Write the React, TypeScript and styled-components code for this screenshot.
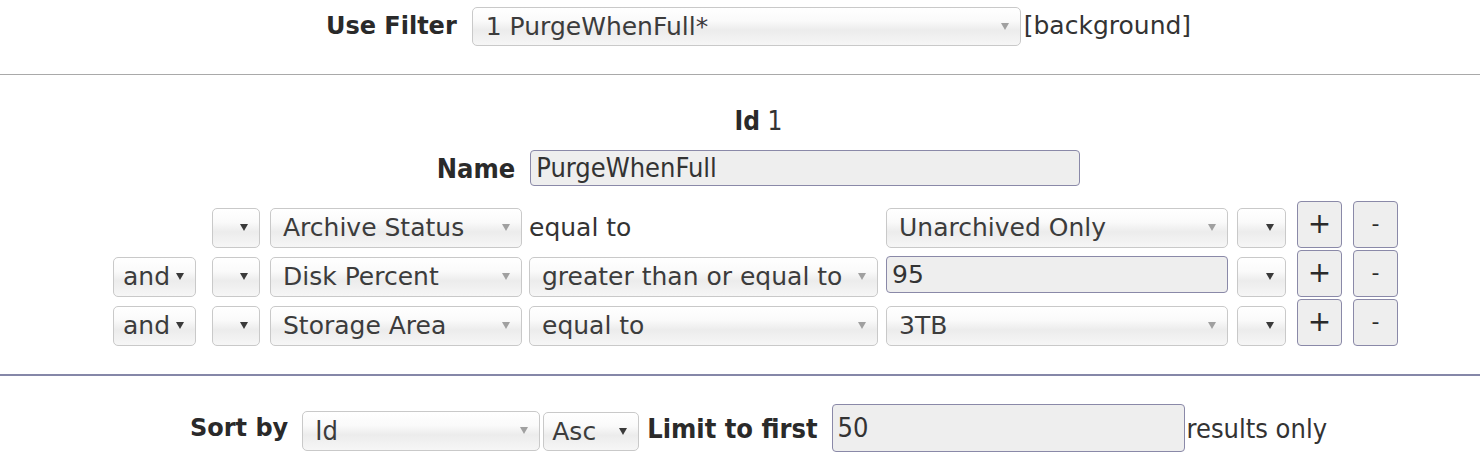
import React from "react";
import styled, { createGlobalStyle } from "styled-components";

const GlobalStyle = createGlobalStyle`
  html, body { margin: 0; padding: 0; background: #ffffff; }
  body { font-family: "DejaVu Sans", Verdana, sans-serif; color: #222; }
`;

const VERDANA = `"DejaVu Sans", Verdana, sans-serif`;
const TAHOMA = `"DejaVu Sans Condensed", "Liberation Sans Narrow", "Liberation Sans", sans-serif`;
const V_SIZE = 25;
const T_SIZE = 27;

const Page = styled.div`
  width: 1480px;
  display: flex;
  flex-direction: column;
`;

const TopBar = styled.div`
  height: 75px;
  border-bottom: 1px solid #a9a9a9;
  display: flex;
  align-items: flex-start;
  justify-content: center;
  padding: 7px 0 0 37px;
  box-sizing: border-box;
`;

const FilterSection = styled.div`
  border-bottom: 2px solid #8587a8;
  padding: 31px 0 28px 0;
  display: flex;
  flex-direction: column;
`;

const SortSection = styled.div`
  padding: 28px 0 0 37px;
  display: flex;
  justify-content: center;
  align-items: center;
`;

const CenterLine = styled.div<{ $mt?: number }>`
  display: flex;
  justify-content: center;
  align-items: center;
  padding-left: 37px;
  margin-top: ${(p) => p.$mt ?? 0}px;
`;

const BoldLabel = styled.span<{ $font?: "v" | "t"; $mr?: number; $ml?: number; $mt?: number }>`
  font-family: ${(p) => (p.$font === "t" ? TAHOMA : VERDANA)};
  font-weight: bold;
  font-size: ${(p) => (p.$font === "t" ? T_SIZE : V_SIZE - 1)}px;
  color: #2a2a2a;
  margin-right: ${(p) => p.$mr ?? 0}px;
  margin-left: ${(p) => p.$ml ?? 0}px;
  margin-top: ${(p) => p.$mt ?? 0}px;
  white-space: nowrap;
`;

const PlainText = styled.span<{ $font?: "v" | "t"; $mr?: number; $ml?: number; $mt?: number }>`
  font-family: ${(p) => (p.$font === "t" ? TAHOMA : VERDANA)};
  font-size: ${(p) => (p.$font === "t" ? T_SIZE : V_SIZE)}px;
  color: #333;
  margin-right: ${(p) => p.$mr ?? 0}px;
  margin-left: ${(p) => p.$ml ?? 0}px;
  margin-top: ${(p) => p.$mt ?? 0}px;
  white-space: nowrap;
`;

const IdText = styled.div`
  font-family: ${TAHOMA};
  font-size: ${T_SIZE - 1}px;
  color: #333;
  line-height: 30px;
  padding-left: 37px;
  text-align: center;
  & b { color: #2a2a2a; }
`;

const SelectBox = styled.div<{
  $w: number;
  $h?: number;
  $pl?: number;
  $mr?: number;
  $ml?: number;
  $mt?: number;
  $font?: "v" | "t";
}>`
  width: ${(p) => p.$w}px;
  height: ${(p) => p.$h ?? 40}px;
  margin-right: ${(p) => p.$mr ?? 0}px;
  margin-left: ${(p) => p.$ml ?? 0}px;
  margin-top: ${(p) => p.$mt ?? 0}px;
  box-sizing: border-box;
  flex: none;
  display: flex;
  align-items: center;
  justify-content: space-between;
  padding: 0 11px 1px ${(p) => p.$pl ?? 12}px;
  border: 1px solid #c9c9c9;
  border-radius: 5px;
  background: linear-gradient(to bottom, #ffffff 0%, #fafafa 35%, #ececec 60%, #f6f6f6 100%);
  font-family: ${(p) => (p.$font === "t" ? TAHOMA : VERDANA)};
  font-size: ${(p) => (p.$font === "t" ? T_SIZE : V_SIZE)}px;
  color: #3c3c3c;
  white-space: nowrap;
  overflow: hidden;
`;

const Arrow = styled.span<{ $dark?: boolean }>`
  flex: none;
  width: 0;
  height: 0;
  border-left: 4px solid transparent;
  border-right: 4px solid transparent;
  border-top: 7px solid ${(p) => (p.$dark ? "#3a3a3a" : "#a0a0a0")};
  margin-left: 6px;
`;

const TextInput = styled.div<{ $w: number; $h: number; $mr?: number; $mb?: number; $font?: "v" | "t" }>`
  width: ${(p) => p.$w}px;
  height: ${(p) => p.$h}px;
  margin-right: ${(p) => p.$mr ?? 0}px;
  margin-bottom: ${(p) => p.$mb ?? 0}px;
  box-sizing: border-box;
  flex: none;
  display: flex;
  align-items: center;
  padding: 0 0 1px 5px;
  border: 1px solid #8a89a8;
  border-radius: 4px;
  background: #eeeeee;
  font-family: ${(p) => (p.$font === "t" ? TAHOMA : VERDANA)};
  font-size: ${(p) => (p.$font === "t" ? T_SIZE : V_SIZE)}px;
  color: #333;
  white-space: nowrap;
`;

const Rules = styled.div`
  margin-top: 15px;
  padding-left: 113px;
  display: flex;
  flex-direction: column;
  gap: 2px;
`;

const RuleRow = styled.div`
  display: flex;
  align-items: flex-end;
  height: 47px;
`;

const Spacer = styled.div<{ $w: number }>`
  width: ${(p) => p.$w}px;
  flex: none;
`;

const OpText = styled.div<{ $w: number; $mr: number }>`
  width: ${(p) => p.$w}px;
  margin-right: ${(p) => p.$mr}px;
  flex: none;
  height: 40px;
  display: flex;
  align-items: center;
  font-family: ${VERDANA};
  font-size: ${V_SIZE}px;
  color: #333;
  padding-bottom: 1px;
  box-sizing: border-box;
`;

const RowButton = styled.button<{ $mr?: number }>`
  width: 45px;
  height: 47px;
  margin-right: ${(p) => p.$mr ?? 0}px;
  flex: none;
  box-sizing: border-box;
  border: 1px solid #8a89a8;
  border-radius: 4px;
  background: #eeeeee;
  font-family: ${VERDANA};
  font-size: 28px;
  color: #2a2a2a;
  padding: 0 0 2px 0;
  display: flex;
  align-items: center;
  justify-content: center;
  cursor: pointer;
`;

const MinusGlyph = styled.span`
  font-size: 22px;
`;

type Rule = {
  conj?: string;
  field: string;
  op: string;
  opSelect: boolean;
  value: string;
  valueInput: boolean;
};

const rules: Rule[] = [
  { field: "Archive Status", op: "equal to", opSelect: false, value: "Unarchived Only", valueInput: false },
  { conj: "and", field: "Disk Percent", op: "greater than or equal to", opSelect: true, value: "95", valueInput: true },
  { conj: "and", field: "Storage Area", op: "equal to", opSelect: true, value: "3TB", valueInput: false },
];

export default function App() {
  return (
    <Page>
      <GlobalStyle />
      <TopBar>
        <BoldLabel $mr={15} $mt={5}>Use Filter</BoldLabel>
        <SelectBox $w={549} $h={39} $pl={13}>
          <span>1 PurgeWhenFull*</span>
          <Arrow />
        </SelectBox>
        <PlainText $ml={3} $mt={4}>[background]</PlainText>
      </TopBar>

      <FilterSection>
        <IdText>
          <b>Id</b> 1
        </IdText>
        <CenterLine $mt={14}>
          <BoldLabel $font="t" $mr={15}>Name</BoldLabel>
          <TextInput $w={550} $h={36} $font="t">PurgeWhenFull</TextInput>
        </CenterLine>
        <Rules>
          {rules.map((r, i) => (
            <RuleRow key={i}>
              {r.conj ? (
                <SelectBox $w={83} $pl={9} $mr={16}>
                  <span>{r.conj}</span>
                  <Arrow $dark />
                </SelectBox>
              ) : (
                <Spacer $w={99} />
              )}
              <SelectBox $w={48} $mr={10}>
                <span />
                <Arrow $dark />
              </SelectBox>
              <SelectBox $w={252} $mr={7}>
                <span>{r.field}</span>
                <Arrow />
              </SelectBox>
              {r.opSelect ? (
                <SelectBox $w={349} $mr={8}>
                  <span>{r.op}</span>
                  <Arrow />
                </SelectBox>
              ) : (
                <OpText $w={349} $mr={8}>{r.op}</OpText>
              )}
              {r.valueInput ? (
                <TextInput $w={342} $h={37} $mr={9} $mb={4}>{r.value}</TextInput>
              ) : (
                <SelectBox $w={342} $mr={9}>
                  <span>{r.value}</span>
                  <Arrow />
                </SelectBox>
              )}
              <SelectBox $w={49} $mr={11}>
                <span />
                <Arrow $dark />
              </SelectBox>
              <RowButton $mr={11}>+</RowButton>
              <RowButton>
                <MinusGlyph>-</MinusGlyph>
              </RowButton>
            </RuleRow>
          ))}
        </Rules>
      </FilterSection>

      <SortSection>
        <BoldLabel $mr={14}>Sort by</BoldLabel>
        <SelectBox $w={238} $font="t" $mt={6}>
          <span>Id</span>
          <Arrow />
        </SelectBox>
        <SelectBox $w={96} $pl={8} $mr={8} $ml={3} $mt={7} $h={39}>
          <span>Asc</span>
          <Arrow $dark />
        </SelectBox>
        <BoldLabel $font="t" $mr={14}>Limit to first</BoldLabel>
        <TextInput $w={353} $h={48} $font="t" $mr={2}>50</TextInput>
        <PlainText $font="t">results only</PlainText>
      </SortSection>
    </Page>
  );
}
